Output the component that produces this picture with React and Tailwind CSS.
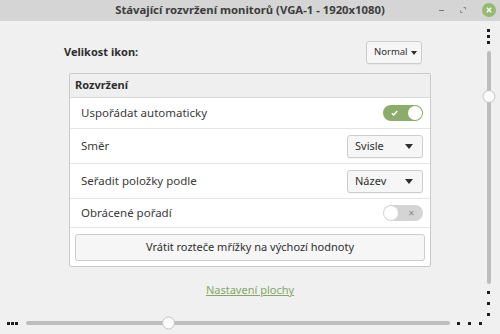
const Caret = ({ small }) =>
  small ? (
    <svg width="6" height="4" viewBox="0 0 6 4" className="shrink-0">
      <path d="M0 0 L6 0 L3 4 Z" fill="#2e2e2e" />
    </svg>
  ) : (
    <svg width="8" height="5" viewBox="0 0 8 5" className="shrink-0">
      <path d="M0 0 L8 0 L4 5 Z" fill="#2e2e2e" />
    </svg>
  );

const Combo = ({ label, className, small }) => (
  <button
    className={`flex h-[23px] items-center justify-between rounded-[3px] border border-[#cdcdcd] bg-[#f6f6f6] text-[#2e2e2e] shadow-[0_1px_0_rgba(0,0,0,0.04)] ${className}`}
  >
    <span>{label}</span>
    <Caret small={small} />
  </button>
);

const Toggle = ({ on }) =>
  on ? (
    <div className="flex h-[16px] w-[40px] items-center justify-between rounded-full bg-[#8cac6b] pl-[8px] pr-[1px]">
      <svg width="7" height="6" viewBox="0 0 7 6">
        <path d="M0.8 3.2 L2.7 5 L6.2 1" stroke="#fff" strokeWidth="1.4" fill="none" />
      </svg>
      <div className="h-[14px] w-[14px] rounded-full bg-white" />
    </div>
  ) : (
    <div className="flex h-[16px] w-[40px] items-center justify-between rounded-full bg-[#d4d4d4] pl-[1px] pr-[8px]">
      <div className="h-[14px] w-[14px] rounded-full bg-white" />
      <span className="text-[8px] leading-none text-[#8a8a8a]">✕</span>
    </div>
  );

const Row = ({ label, h, children, last }) => (
  <div
    className={`flex items-center justify-between pl-[11px] pr-[7px] ${h} ${
      last ? "" : "border-b border-[#e4e4e4]"
    }`}
  >
    <span className="text-[11.5px] text-[#3a3a3a]">{label}</span>
    {children}
  </div>
);

const Dot = () => <div className="h-[3px] w-[3px] bg-[#1e1e1e]" />;

export default function App() {
  return (
    <div
      className="flex h-[334px] w-[500px] flex-col overflow-hidden bg-[#f0f0f0]"
      style={{ fontFamily: '"Noto Sans", "Open Sans", sans-serif' }}
    >
      {/* Title bar */}
      <div className="relative flex h-[21px] shrink-0 items-center justify-center bg-[#d5d5d5]">
        <span className="text-[11.3px] font-bold text-[#3c3c3c]">
          Stávající rozvržení monitorů (VGA-1 - 1920x1080)
        </span>
        <div className="absolute right-[4px] top-[3px] flex items-center gap-[16px]">
          <div className="h-[1px] w-[5px] bg-[#777]" />
          <svg width="6" height="6" viewBox="0 0 6 6">
            <path d="M3.5 0.5 H5.5 V2.5 M0.5 3.5 V5.5 H2.5" stroke="#888" strokeWidth="1" fill="none" />
          </svg>
          <div className="flex h-[14px] w-[14px] items-center justify-center rounded-full bg-[#93bb6e]">
            <svg width="6" height="6" viewBox="0 0 6 6">
              <path d="M0.8 0.8 L5.2 5.2 M5.2 0.8 L0.8 5.2" stroke="#fff" strokeWidth="1.5" />
            </svg>
          </div>
        </div>
      </div>

      <div className="flex min-h-0 flex-1">
        {/* Main content */}
        <div className="flex flex-1 flex-col pl-[64px] pt-[20px]">
          <div className="flex w-[358px] items-center justify-between">
            <span className="text-[11px] font-bold text-[#2e2e2e]">Velikost ikon:</span>
            <Combo label="Normal" small className="w-[56px] pl-[7px] pr-[4px] text-[9.5px]" />
          </div>

          <div className="ml-[5px] mt-[9px] w-[362px] rounded-[2px] border border-[#cacaca] bg-white">
            <div className="flex h-[24px] items-center border-b border-[#d8d8d8] bg-[#efefef] pl-[5px]">
              <span className="text-[11px] font-bold text-[#2e2e2e]">Rozvržení</span>
            </div>
            <Row label="Uspořádat automaticky" h="h-[31px]">
              <Toggle on />
            </Row>
            <Row label="Směr" h="h-[35px]">
              <Combo label="Svisle" className="w-[76px] pl-[7px] pr-[9px] text-[11px]" />
            </Row>
            <Row label="Seřadit položky podle" h="h-[35px]">
              <Combo label="Název" className="w-[76px] pl-[7px] pr-[9px] text-[11px]" />
            </Row>
            <Row label="Obrácené pořadí" h="h-[29px]">
              <Toggle />
            </Row>
            <div className="px-[5px] pb-[5px] pt-[6px]">
              <button className="flex h-[27px] w-full items-center justify-center rounded-[3px] border border-[#cdcdcd] bg-[#f6f6f6] text-[11px] text-[#2e2e2e]">
                Vrátit rozteče mřížky na výchozí hodnoty
              </button>
            </div>
          </div>

          <div className="ml-[5px] mt-[15px] flex w-[362px] justify-center">
            <span className="text-[11px] text-[#85a766] underline">Nastavení plochy</span>
          </div>
        </div>

        {/* Vertical scale */}
        <div className="flex w-[22px] shrink-0 flex-col items-center pr-[1px] pt-[8px]">
          <div className="flex flex-col gap-[3px]">
            <Dot />
            <Dot />
            <Dot />
          </div>
          <div className="relative mt-[7px] h-[235px] w-[4px] rounded-full bg-[#bdbdbd]">
            <div className="absolute left-1/2 top-[39px] h-[13px] w-[13px] -translate-x-1/2 rounded-full border border-[#c4c4c4] bg-[#fafafa]" />
          </div>
          <div className="mt-[7px] flex flex-col gap-[8px]">
            <Dot />
            <Dot />
            <Dot />
          </div>
        </div>
      </div>

      {/* Horizontal scale */}
      <div className="flex h-[18px] shrink-0 items-center pb-[4px] pl-[7px]">
        <div className="flex gap-[1px]">
          <Dot />
          <Dot />
          <Dot />
        </div>
        <div className="relative ml-[8px] h-[4px] w-[424px] rounded-full bg-[#bdbdbd]">
          <div className="absolute left-[136px] top-1/2 h-[13px] w-[13px] -translate-y-1/2 rounded-full border border-[#c4c4c4] bg-[#fafafa]" />
        </div>
        <div className="ml-[7px] flex gap-[8px]">
          <Dot />
          <Dot />
          <Dot />
        </div>
      </div>
    </div>
  );
}
